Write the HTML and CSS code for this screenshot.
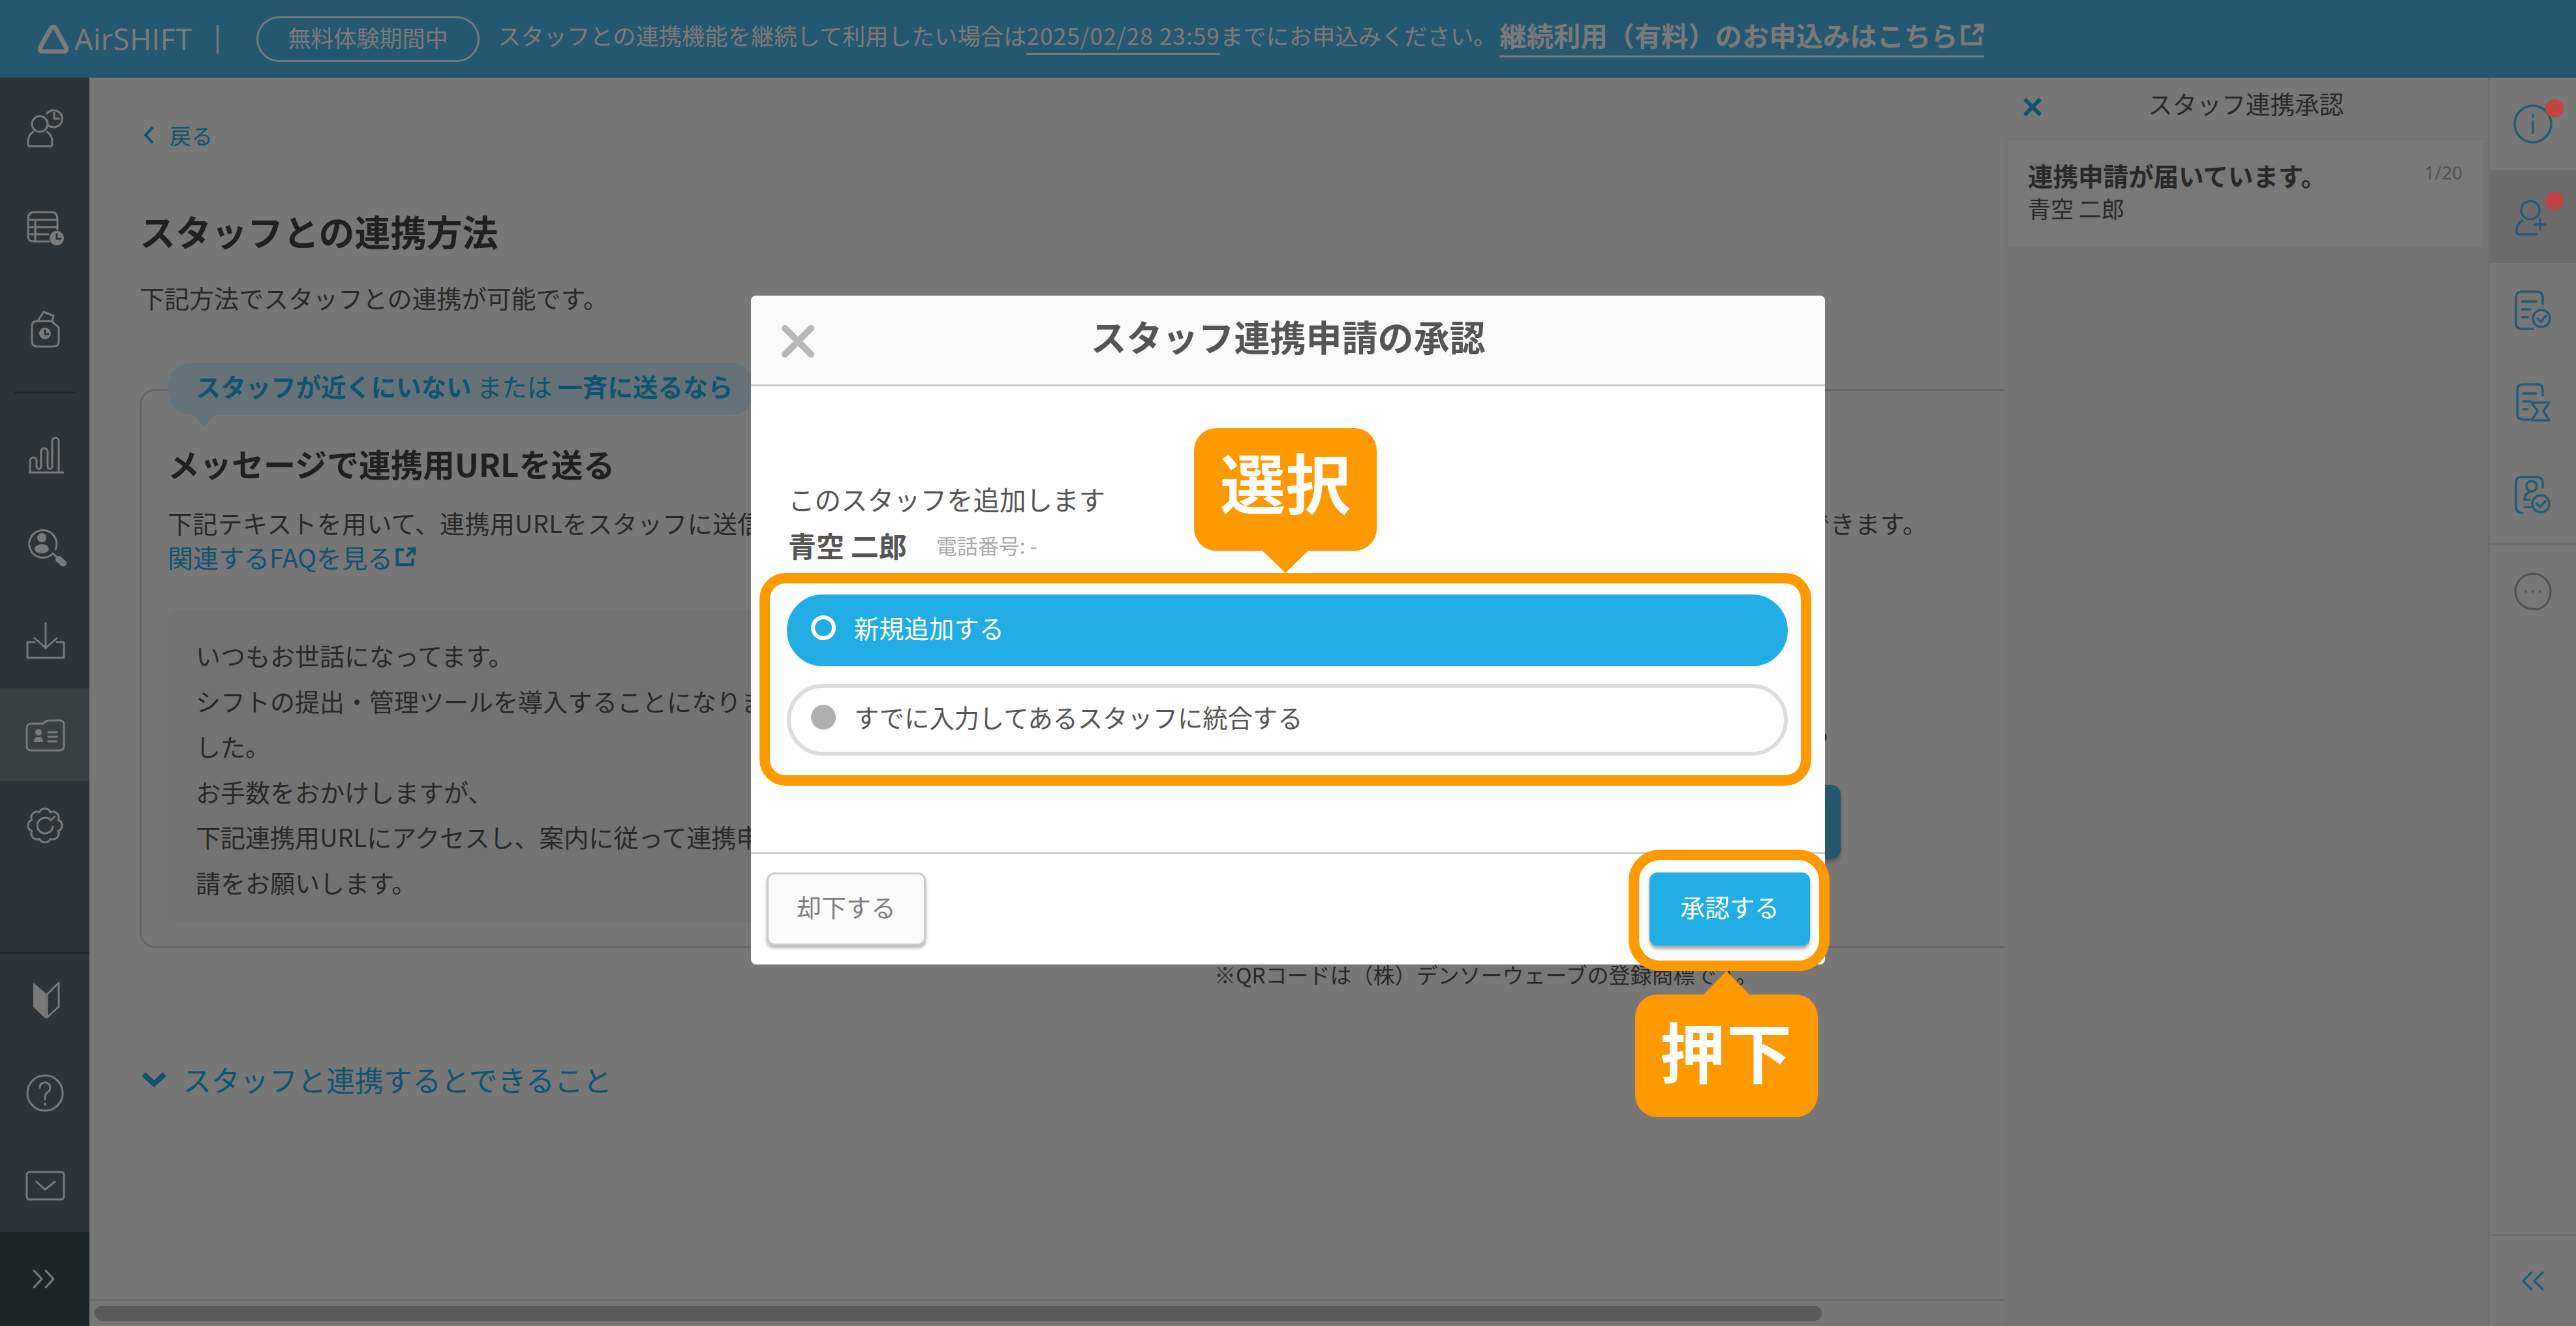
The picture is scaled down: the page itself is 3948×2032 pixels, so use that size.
FILE: index.html
```html
<!DOCTYPE html>
<html lang="ja">
<head>
  <meta charset="UTF-8" />
  <title>スタッフとの連携方法</title>
  <link rel="stylesheet" href="styles.css">
</head>
<body>
  <header class="topbar">
    <svg class="logo-mark" viewBox="0 0 47 44"><path d="M23.500 3 C26 3 27 5 28 7 L43 34 C45 38 43 41 39 41 H8 C4 41 2 38 4 34 L19 7 C20 5 21 3 23.500 3 Z"/></svg>
    <span class="logo-text">AirSHIFT</span>
    <span class="logo-sep"></span>
    <span class="trial-pill">無料体験期間中</span>
    <span class="trial-text">スタッフとの連携機能を継続して利用したい場合は<span class="trial-date">2025/02/28 23:59</span>までにお申込みください。</span>
    <a class="trial-link">継続利用（有料）のお申込みはこちら<svg class="ext-icon" viewBox="0 0 36 34"><path d="M15 5 H3 V31 H30 V20 M19 17 L33 3 M21 3 H33 V14"/></svg></a>
  </header>

  <div class="layout">
    <nav class="sidebar">
      <div class="side-group side-top">
        <div class="side-item tall"><svg class="icon" viewBox="0 0 70 70"><circle cx="27" cy="29" r="12"/><path d="M17 41 C12 44 9 48 9 56 V60 Q9 63 12 63 H43 Q46 63 46 60 V56 C46 48 43 44 38 41"/><path d="M38 13 A13 13 0 1 1 40 31 M49 12 V21 H56"/></svg></div>
        <div class="side-item tall"><svg class="icon" viewBox="0 0 70 70"><path d="M41 55 H17 Q9 55 9 47 V20 Q9 10 19 10 H44 Q54 10 54 20 V37 M9 22 H54 M9 33 H54 M9 44 H40 M20 22 V55"/><circle class="solid" cx="53" cy="50" r="11"/><path class="cut" d="M53 44 V51 H59"/></svg></div>
        <div class="side-item tall"><svg class="icon" viewBox="0 0 70 70"><path d="M25 21 L33 9 L48 15 L46 24 L56 33 V54 Q56 62 48 62 H23 Q15 62 15 54 V31 Q15 23 23 23 H44"/><circle class="solid" cx="35" cy="42" r="9"/><path class="cut" d="M35 37 V43 H40"/></svg></div>
      </div>
      <div class="side-group side-mid">
        <div class="side-item"><svg class="icon" viewBox="0 0 70 70"><path d="M12 58 V41 A5 5 0 0 1 22 41 V50 A3.500 3.500 0 0 0 29 50 V27 A5 5 0 0 1 39 27 V50 A3.500 3.500 0 0 0 46 50 V11 A5 5 0 0 1 56 11 V58 M11 59 H63"/></svg></div>
        <div class="side-item"><svg class="icon" viewBox="0 6 70 70"><path d="M47 47 A21 21 0 1 1 51 41"/><circle class="solid" cx="30" cy="23" r="7"/><ellipse class="solid" cx="30" cy="40" rx="11" ry="7"/><path d="M47 47 L53 53"/><path class="thick" d="M56 56 L63 62"/></svg></div>
        <div class="side-item"><svg class="icon" viewBox="0 0 70 70"><path d="M36 6 V44 M19 29 L36 44 L53 29 M19 35 H8 V59 H64 V35 H53"/></svg></div>
        <div class="side-item active"><svg class="icon" viewBox="0 0 70 70"><path d="M64 21 V52 Q64 59 57 59 H14 Q7 59 7 52 V25 Q7 18 14 18 H32 Q37 13 43 13 H58 Q64 13 64 19"/><circle class="solid" cx="25" cy="31" r="5"/><path class="solid" d="M18 46 Q18 38 25 38 Q32 38 32 46 Z"/><path d="M40 31 H53 M40 38 H53 M40 45 H53"/></svg></div>
        <div class="side-item"><svg class="icon" viewBox="0 3 70 70"><path d="M55.300 43.400 A9 9 0 0 1 43.400 55.300 A9 9 0 0 1 26.600 55.300 A9 9 0 0 1 14.700 43.400 A9 9 0 0 1 14.700 26.600 A9 9 0 0 1 26.600 14.700 A9 9 0 0 1 43.400 14.700 A9 9 0 0 1 55.300 26.600 A9 9 0 0 1 55.300 43.400 Z"/><path d="M44 27 A12 12 0 1 0 47 37 M44 27 L50 21"/></svg></div>
      </div>
      <div class="side-group side-low">
        <div class="side-item"><svg class="icon" viewBox="0 0 70 70"><path class="solid" d="M17 8 L36 24 V63 L17 45 Z"/><path d="M56 8 L38 26 V61 L56 45 Z"/></svg></div>
        <div class="side-item"><svg class="icon" viewBox="0 0 70 70"><circle cx="35" cy="35" r="27"/><path d="M27 27 A8 8 0 1 1 40 33 Q35 36 35 41 V45 M35 51 V53"/></svg></div>
        <div class="side-item"><svg class="icon" viewBox="0 0 70 70"><rect x="7" y="14" width="57" height="42" rx="4"/><path d="M22 29 L35 41 L50 29"/></svg></div>
      </div>
      <div class="side-bottom"><svg class="icon small" viewBox="0 0 40 32"><path d="M3 3 L15 16 L3 29 M21 3 L33 16 L21 29"/></svg></div>
    </nav>

    <main class="main">
      <div class="main-body">
        <a class="back"><svg class="back-chevron" viewBox="0 0 16 30"><path d="M14 3 L3 15 L14 27"/></svg>戻る</a>
        <h1 class="page-title">スタッフとの連携方法</h1>
        <p class="page-lead">下記方法でスタッフとの連携が可能です。</p>

        <section class="method-card">
          <div class="method-bubble"><b>スタッフが近くにいない</b> または <b>一斉に送るなら</b></div>
          <h2 class="method-title">メッセージで連携用URLを送る</h2>
          <p class="method-text">下記テキストを用いて、連携用URLをスタッフに送信してください。スタッフがURLにアクセスして申請を行うと、本画面で連携を承認することができます。</p>
          <a class="faq-link">関連するFAQを見る<svg class="ext-icon blue" viewBox="0 0 36 34"><path d="M15 5 H3 V31 H30 V20 M19 17 L33 3 M21 3 H33 V14"/></svg></a>
          <div class="method-row">
            <div class="message-box">いつもお世話になってます。<br>シフトの提出・管理ツールを導入することになりま<br>した。<br>お手数をおかけしますが、<br>下記連携用URLにアクセスし、案内に従って連携申<br>請をお願いします。</div>
            <div class="copy-col">
              <p class="copy-note">このテキストをコピーして、メールやメッセージアプリから</p>
              <a class="copy-btn">テキストをコピーする</a>
            </div>
          </div>
        </section>

        <p class="qr-note">※QRコードは（株）デンソーウェーブの登録商標です。</p>
        <a class="more-toggle"><svg class="more-chevron" viewBox="0 0 40 24"><path d="M4 4 L20 19 L36 4"/></svg>スタッフと連携するとできること</a>
      </div>
      <div class="scrollbar"><div class="scrollbar-thumb"></div></div>
    </main>

    <aside class="panel">
      <div class="panel-head">
        <svg class="panel-close" viewBox="0 0 30 28"><path d="M3 2 L27 26 M27 2 L3 26"/></svg>
        <span>スタッフ連携承認</span>
      </div>
      <div class="panel-card">
        <div class="panel-card-text">
          <div class="panel-card-title">連携申請が届いています。</div>
          <div class="panel-card-name">青空 二郎</div>
        </div>
        <span class="panel-card-count">1/20</span>
      </div>
    </aside>

    <div class="rail">
      <div class="rail-item"><svg class="icon teal" viewBox="0 0 70 70"><circle cx="35" cy="35" r="28"/><path d="M35 31 V49 M35 21 V24"/></svg><span class="badge"></span></div>
      <div class="rail-item active"><svg class="icon teal" viewBox="0 0 70 70"><circle cx="31" cy="25" r="14"/><path d="M19 41 C12 45 10 50 10 59 Q10 62 14 62 H40 M38 47 H54 M46 39 V55"/></svg><span class="badge"></span></div>
      <div class="rail-item"><svg class="icon teal" viewBox="0 0 70 70"><path d="M41 8 H18 Q9 8 9 17 V57 Q9 65 17 65 H35 M50 27 V17 Q50 8 41 8 M18 23 H40 M18 35 H31 M18 47 H27"/><circle cx="48" cy="49" r="13"/><path d="M42 49 L47 54 L55 45"/></svg></div>
      <div class="rail-item"><svg class="icon teal" viewBox="0 0 70 70"><path d="M41 8 H20 Q11 8 11 17 V53 Q11 62 20 62 H30 M50 25 V17 Q50 8 41 8 M20 22 H40 M20 34 H31 M20 46 H27"/><path d="M33 36 H60 L51 49 L60 63 H33 L42 49 Z"/></svg></div>
      <div class="rail-item"><svg class="icon teal" viewBox="0 0 70 70"><path d="M19 63 Q9 63 9 54 V17 Q9 8 18 8 H40 Q50 8 50 17 V24"/><circle cx="33" cy="22" r="8"/><path d="M33 30 Q22 32 22 43 H30 M22 54 H32"/><circle cx="47" cy="49" r="13"/><path d="M41 49 L46 54 L54 45"/></svg></div>
      <div class="rail-item chat"><svg class="icon grey" viewBox="0 0 70 70"><path d="M43 64 L52 59 Q62 51 62 36 A27 27 0 1 0 38 63 L43 64 M24 36 V37 M35 36 V37 M46 36 V37"/></svg></div>
      <div class="rail-bottom"><svg class="icon small teal" viewBox="0 0 40 32"><path d="M18 3 L5 16 L18 29 M35 3 L22 16 L35 29"/></svg></div>
    </div>
  </div>

  <div class="overlay">
    <div class="modal">
      <div class="modal-head">
        <svg class="modal-close" viewBox="0 0 50 50"><path d="M5 5 L45 45 M45 5 L5 45"/></svg>
        <span>スタッフ連携申請の承認</span>
      </div>
      <div class="modal-body">
        <p class="modal-lead">このスタッフを追加します</p>
        <p class="modal-name"><b>青空 二郎</b><span class="modal-phone">電話番号: -</span></p>
        <div class="radio on"><span class="radio-dot"></span>新規追加する</div>
        <div class="radio"><span class="radio-dot"></span>すでに入力してあるスタッフに統合する</div>
      </div>
      <div class="modal-foot">
        <button class="btn-reject">却下する</button>
        <button class="btn-approve">承認する</button>
      </div>

      <div class="mark mark-select"></div>
      <div class="mark mark-press"></div>
      <div class="callout callout-select">選択</div>
      <div class="callout callout-press">押下</div>
    </div>
  </div>
</body>
</html>
```

FILE: styles.css
```css
* {
  box-sizing: border-box;
  margin: 0;
  padding: 0;
}
html, body {
  width: 3948px;
  height: 2032px;
  overflow: hidden;
}
body {
  font-family: "Noto Sans CJK JP", "Noto Sans", sans-serif;
  color: #555;
  background: #f9f9f9;
  display: flex;
  flex-direction: column;
}

/* top bar */
.topbar {
  height: 119px;
  flex: none;
  display: flex;
  align-items: center;
  padding-left: 58px;
  background: #4fb6e8;
  color: #fff;
  white-space: nowrap;
}
.logo-mark {
  width: 47px;
  height: 44px;
  fill: none;
  stroke: #fff;
  stroke-width: 7;
}
.logo-text {
  margin-left: 9px;
  width: 180px;
  font-family: "Open Sans", sans-serif;
  font-size: 45px;
  font-weight: 400;
  letter-spacing: 0.5px;
}
.logo-sep {
  width: 3px;
  height: 44px;
  margin-left: 38px;
  background: #fff;
}
.trial-pill {
  width: 342px;
  height: 70px;
  margin-left: 58px;
  border: 3px solid #fff;
  border-radius: 35px;
  font-size: 35px;
  line-height: 58px;
  text-align: center;
}
.trial-text {
  margin-left: 28px;
  margin-bottom: 8px;
  font-size: 35.300px;
}
.trial-date {
  display: inline-block;
  border-bottom: 3px solid #fff;
  line-height: 54px;
  letter-spacing: 1px;
}
.trial-link {
  display: flex;
  align-items: center;
  height: 56px;
  margin-left: 5px;
  padding-bottom: 10px;
  border-bottom: 3px solid #fff;
  font-size: 41.300px;
  font-weight: 700;
}
.ext-icon {
  width: 36px;
  height: 34px;
  margin-left: 4px;
  fill: none;
  stroke: #fff;
  stroke-width: 5;
}
.ext-icon.blue {
  width: 32px;
  height: 30px;
  stroke: #22aee5;
}

.layout {
  flex: 1;
  min-height: 0;
  display: flex;
}

/* left nav */
.sidebar {
  width: 137px;
  flex: none;
  display: flex;
  flex-direction: column;
  background: #606b74;
}
.side-group {
  display: flex;
  flex-direction: column;
}
.side-top {
  height: 484px;
  padding-bottom: 22px;
  position: relative;
  background: linear-gradient(#474f54, #474f54) no-repeat 22px 100% / 93px 3px;
}
.side-mid {
  flex: 1;
  padding-top: 26px;
  border-bottom: 3px solid #474f54;
}
.side-low {
  flex: none;
}
.side-item {
  height: 142px;
  flex: none;
  display: flex;
  align-items: center;
  justify-content: center;
}
.side-item.tall {
  height: 154px;
}
.side-item.active {
  background: #7a8488;
}
.side-bottom {
  height: 144px;
  flex: none;
  display: flex;
  align-items: center;
  justify-content: center;
  background: #3f4e52;
}
.icon {
  width: 70px;
  height: 70px;
  fill: none;
  stroke: #fff;
  stroke-width: 3;
  stroke-linecap: round;
  stroke-linejoin: round;
}
.icon.small {
  width: 40px;
  height: 32px;
}
.icon .solid {
  fill: #fff;
  stroke: none;
}
.icon .cut {
  stroke: #606b74;
}
.icon .thick {
  stroke-width: 10;
}
.icon.teal {
  stroke: #52bdf0;
  stroke-width: 3.500;
}
.icon.grey {
  stroke: #a8a8a8;
}

/* main column */
.main {
  flex: 1;
  min-width: 0;
  display: flex;
  flex-direction: column;
  overflow: hidden;
}
.main-body {
  flex: 1;
  min-height: 0;
  padding-left: 77px;
  overflow: hidden;
}
.back {
  display: flex;
  align-items: center;
  height: 40px;
  margin-top: 68px;
  color: #22aee5;
  font-size: 33px;
}
.back-chevron {
  width: 16px;
  height: 30px;
  margin: 0 24px 0 6px;
  fill: none;
  stroke: #22aee5;
  stroke-width: 4;
}
.page-title {
  margin-top: 91px;
  line-height: 70px;
  font-size: 55px;
  font-weight: 700;
  color: #444;
}
.page-lead {
  margin-top: 43px;
  line-height: 50px;
  font-size: 38px;
}
.method-card {
  position: relative;
  width: 3000px;
  margin-top: 115px;
  padding: 0 0 38px 40px;
  border: 3px solid #d6d6d6;
  border-radius: 24px;
}
.method-bubble {
  position: absolute;
  top: -43px;
  left: 40px;
  width: 900px;
  height: 80px;
  padding-left: 43px;
  border-radius: 36px;
  background: #d4effd;
  color: #22aee5;
  font-size: 38.400px;
  line-height: 70px;
  white-space: nowrap;
}
.method-bubble::after {
  content: "";
  position: absolute;
  left: 40px;
  top: 80px;
  border-left: 16px solid transparent;
  border-right: 16px solid transparent;
  border-top: 18px solid #d4effd;
}
.method-title {
  padding-top: 81px;
  line-height: 60px;
  font-size: 49px;
  font-weight: 700;
  color: #444;
}
.method-text {
  margin-top: 35px;
  line-height: 52px;
  font-size: 38px;
  letter-spacing: 0.3px;
  white-space: nowrap;
}
.faq-link {
  display: flex;
  align-items: center;
  line-height: 52px;
  font-size: 39px;
  color: #22aee5;
}
.method-row {
  display: flex;
  margin-top: 55px;
}
.message-box {
  width: 950px;
  height: 478px;
  flex: none;
  padding: 35px 0 0 43px;
  border-radius: 12px;
  background: #f0f0f0;
  line-height: 69.500px;
  font-size: 38px;
  white-space: nowrap;
}
.copy-col {
  width: 1550px;
  flex: none;
  margin-left: 64px;
  display: flex;
  flex-direction: column;
  align-items: flex-end;
}
.copy-note {
  margin-top: 163px;
  padding-right: 16px;
  line-height: 50px;
  font-size: 37.500px;
  white-space: nowrap;
}
.copy-btn {
  width: 400px;
  height: 113px;
  margin-top: 56px;
  border-radius: 14px;
  background: #4fb6e8;
  box-shadow: 0 4px 6px rgba(0, 0, 0, 0.3);
  color: #fff;
  font-size: 36px;
  line-height: 113px;
  text-align: center;
}
.qr-note {
  margin: 20px 0 0 1647px;
  line-height: 40px;
  font-size: 33px;
  white-space: nowrap;
}
.more-toggle {
  display: flex;
  align-items: center;
  margin-top: 111px;
  height: 60px;
  font-size: 44px;
  color: #22aee5;
}
.more-chevron {
  width: 40px;
  height: 24px;
  margin: 0 24px 0 2px;
  fill: none;
  stroke: #22aee5;
  stroke-width: 8;
}
.scrollbar {
  height: 41px;
  flex: none;
  padding: 7px 0 0 8px;
  border-top: 3px solid #e0e0e0;
}
.scrollbar-thumb {
  width: 2647px;
  height: 23px;
  border-radius: 12px;
  background: #bcbcbc;
}

/* right panel */
.panel {
  width: 742px;
  flex: none;
  padding: 0 7px 0 5px;
  background: #f3f3f3;
}
.panel-head {
  position: relative;
  height: 91px;
  margin: 0 -7px 0 -5px;
  background: #f9f9f9;
  font-size: 37.500px;
  line-height: 78px;
  text-align: center;
}
.panel-close {
  position: absolute;
  left: 29px;
  top: 31px;
  width: 30px;
  height: 28px;
  fill: none;
  stroke: #22aee5;
  stroke-width: 6;
}
.panel-card {
  display: flex;
  justify-content: space-between;
  height: 166px;
  margin-top: 4px;
  padding: 28px 31px 0 31px;
  border: 1px solid #efefef;
  background: #fbfbfb;
}
.panel-card-title {
  line-height: 50px;
  font-size: 38.500px;
  font-weight: 700;
}
.panel-card-name {
  line-height: 52px;
  font-size: 35px;
}
.panel-card-count {
  margin-top: 3px;
  line-height: 36px;
  font-family: "Noto Sans", sans-serif;
  font-size: 28px;
  color: #aaa;
}

/* right icon rail */
.rail {
  width: 135px;
  flex: none;
  display: flex;
  flex-direction: column;
  border-left: 3px solid #e6e6e6;
  background: #f9f9f9;
}
.rail-item {
  position: relative;
  height: 142px;
  flex: none;
  display: flex;
  align-items: center;
  justify-content: center;
}
.rail-item.active {
  background: #e2e2e2;
}
.rail-item.chat {
  margin-top: 3px;
  border-top: 3px solid #e6e6e6;
}
.badge {
  position: absolute;
  top: 33px;
  left: 85px;
  z-index: 20;
  width: 28px;
  height: 28px;
  border-radius: 50%;
  background: #c04545;
}
.rail-bottom {
  margin-top: auto;
  height: 141px;
  display: flex;
  align-items: center;
  justify-content: center;
  border-top: 3px solid #e6e6e6;
}

/* modal */
.overlay {
  position: fixed;
  top: 0;
  left: 0;
  width: 100%;
  height: 100%;
  z-index: 10;
  display: flex;
  justify-content: center;
  padding-top: 453px;
  background: rgba(0, 0, 0, 0.52);
}
.modal {
  position: relative;
  width: 1646px;
  height: 1025px;
  display: flex;
  flex-direction: column;
  border-radius: 8px;
  background: #fff;
}
.modal-head {
  position: relative;
  height: 139px;
  flex: none;
  border-bottom: 3px solid #ccc;
  border-radius: 8px 8px 0 0;
  background: #fafafa;
  font-size: 55px;
  font-weight: 700;
  line-height: 122px;
  text-align: center;
}
.modal-close {
  position: absolute;
  left: 47px;
  top: 45px;
  width: 50px;
  height: 50px;
  fill: none;
  stroke: #b8b8b8;
  stroke-width: 10;
  stroke-linecap: round;
}
.modal-body {
  flex: 1;
  min-height: 0;
  padding: 145px 57px 0 55px;
}
.modal-lead {
  padding-left: 2px;
  line-height: 56px;
  font-size: 40.500px;
}
.modal-name {
  display: flex;
  align-items: center;
  margin-top: 14px;
  padding-left: 2px;
  line-height: 56px;
  font-size: 43px;
}
.modal-phone {
  margin-left: 45px;
  font-size: 32px;
  color: #aaa;
}
.radio {
  display: flex;
  align-items: center;
  height: 110px;
  margin-top: 27px;
  padding: 0 0 9px 31px;
  border: 6px solid #ddd;
  border-radius: 55px;
  font-size: 38.300px;
}
.radio.on {
  margin-top: 48px;
  border-color: #22aee5;
  background: #22aee5;
  color: #fff;
}
.radio-dot {
  width: 38px;
  height: 38px;
  margin-right: 28px;
  border-radius: 50%;
  background: #b0b0b0;
}
.radio.on .radio-dot {
  border: 6px solid #fff;
  background: transparent;
}
.modal-foot {
  height: 172px;
  flex: none;
  display: flex;
  justify-content: space-between;
  padding: 28px 23px 0 24px;
  border-top: 3px solid #ccc;
}
.btn-reject, .btn-approve {
  width: 244px;
  height: 112px;
  padding-bottom: 10px;
  font-family: inherit;
  font-size: 38px;
  border-radius: 12px;
}
.btn-reject {
  border: 3px solid #ccc;
  background: #fafafa;
  box-shadow: 0 4px 5px rgba(0, 0, 0, 0.3);
  color: #808080;
}
.btn-approve {
  width: 246px;
  border: none;
  background: #22aee5;
  box-shadow: 0 5px 5px rgba(0, 0, 0, 0.35);
  color: #fff;
}

/* orange annotations */
.mark {
  position: absolute;
  border: 16px solid #ff9900;
}
.mark-select {
  left: 13px;
  top: 425px;
  width: 1612px;
  height: 326px;
  border-radius: 40px;
}
.mark-press {
  left: 1345px;
  top: 849px;
  width: 308px;
  height: 186px;
  border-radius: 48px;
}
.callout {
  position: absolute;
  width: 280px;
  height: 188px;
  border-radius: 34px;
  background: #ff9900;
  color: #fff;
  font-size: 100px;
  font-weight: 700;
  text-align: center;
  white-space: nowrap;
}
.callout::after {
  content: "";
  position: absolute;
  left: 105px;
  border-left: 35px solid transparent;
  border-right: 35px solid transparent;
}
.callout-select {
  left: 679px;
  top: 203px;
  line-height: 162px;
}
.callout-select::after {
  top: 188px;
  border-top: 34px solid #ff9900;
}
.callout-press {
  left: 1355px;
  top: 1071px;
  line-height: 170px;
  letter-spacing: 2px;
}
.callout-press::after {
  top: -36px;
  border-bottom: 36px solid #ff9900;
}
```
